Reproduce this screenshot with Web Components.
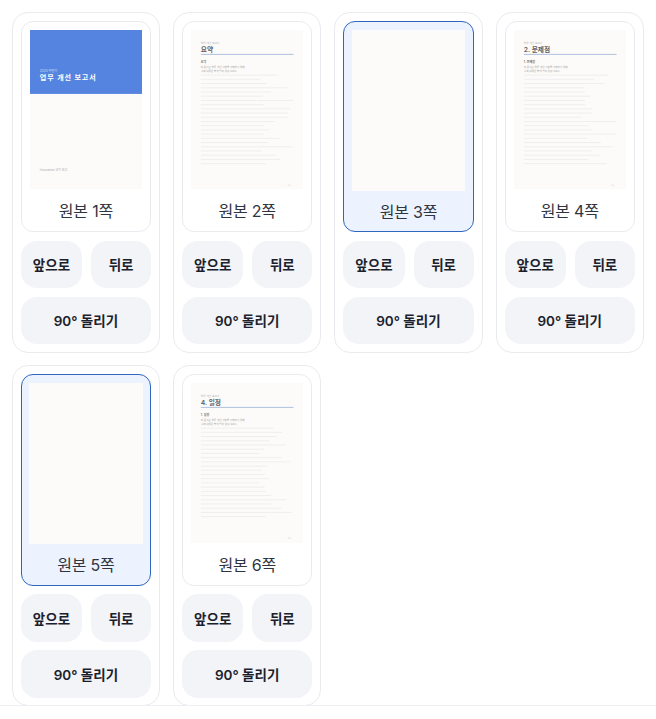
<!DOCTYPE html>
<html lang="ko">
<head>
<meta charset="utf-8">
<title>페이지 정리</title>
<style>
    html, body { margin: 0; padding: 0; background: #fff; }
    body { font-family: Inter, "Noto Sans CJK KR", sans-serif; height: 719px; overflow: hidden; }
</style>
</head>
<body>
<page-grid>
    <page-card number="1" kind="cover"></page-card>
    <page-card number="2" heading="요약" sub="요약" lines="82,64,71,94,76,67,100,68,96,94,94,80,68,74,68,85,72,99,65,81,86,70"></page-card>
    <page-card number="3" selected></page-card>
    <page-card number="4" heading="2. 문제점" sub="1. 문제점" lines="91,76,87,65,66,72,66,66,74,74,63,100,70,74,99,68,83,96,74,82,69,89"></page-card>
    <page-card number="5" selected></page-card>
    <page-card number="6" heading="4. 일정" sub="1. 일정" lines="78,88,82,74,92,68,63,87,96,72,66,69,73,63,69,70,76,92,76,87,98,70"></page-card>
</page-grid>
<bottom-bar></bottom-bar>

<script>
class PageGrid extends HTMLElement {
    constructor() {
        super();
        this.attachShadow({ mode: 'open' });
    }

    connectedCallback() {
        this.shadowRoot.innerHTML = `
            <style>
                :host {
                    display: grid;
                    grid-template-columns: repeat(4, minmax(0, 1fr));
                    gap: 12.5px 13px;
                    padding: 11.7px 12.2px 0 11.8px;
                }
            </style>
            <slot></slot>
        `;
    }
}

// a 320px wide sheet, shrunk to thumbnail size
class DocPage extends HTMLElement {
    constructor() {
        super();
        this.attachShadow({ mode: 'open' });
    }

    connectedCallback() {
        const kind = this.getAttribute('kind');
        const heading = this.getAttribute('heading');
        const sub = this.getAttribute('sub');
        const lines = (this.getAttribute('lines') || '').split(',').filter(Boolean);
        let body = '';

        if (kind === 'cover') {
            body = `
                <div class="cover-top">
                    <div class="cover-year">2025 하반기</div>
                    <div class="cover-title">업무 개선 보고서</div>
                </div>
                <div class="cover-foot">Innovation 성과 보고</div>
            `;
        } else if (heading) {
            body = `
                <div class="content">
                    <div class="eyebrow">업무 개선 보고서</div>
                    <div class="heading">${heading}</div>
                    <div class="rule"></div>
                    <div class="sub">${sub}</div>
                    <div class="para">이 문서는 업무 개선 사항을 설명하기 위해</div>
                    <div class="para">실제 내용은 별개 임의 생성 텍스트</div>
                    <div class="lines">
                        ${lines.map(w => `<i style="width:${w}%"></i>`).join('')}
                    </div>
                </div>
                <div class="folio">- ${this.getAttribute('folio') || ''} -</div>
            `;
        }

        this.shadowRoot.innerHTML = `
            <style>
                :host {
                    display: block;
                    height: 159.5px;
                    background: #fdfbf9;
                    overflow: hidden;
                    font-family: Inter, "Noto Sans CJK KR", sans-serif;
                }
                .sheet {
                    display: flex;
                    flex-direction: column;
                    width: 320px;
                    height: 454px;
                    transform: scale(.3512);
                    transform-origin: 0 0;
                }
                .cover-top {
                    height: 182px;
                    box-sizing: border-box;
                    background: #5584e0;
                    padding: 110px 28px 0;
                    color: #fff;
                }
                .cover-year { font-size: 9px; line-height: 12px; opacity: .7; }
                .cover-title { font-size: 20px; line-height: 28px; font-weight: 700; letter-spacing: 2.6px; white-space: nowrap; }
                .cover-foot { font-size: 8.5px; line-height: 12px; color: #a8a8a8; margin: auto 28px 50px; }
                .content { padding: 31px 28px 0; flex: 1; }
                .eyebrow { font-size: 7.5px; line-height: 12px; color: #b0b0b0; }
                .heading { font-size: 19px; line-height: 24px; font-weight: 600; color: #5c5f66; margin-top: 1px; }
                .rule { height: 3px; background: #b4c5e2; }
                .sub { font-size: 8.5px; line-height: 14px; font-weight: 600; color: #6e6e6e; margin-top: 14px; }
                .para { font-size: 7.2px; line-height: 13px; color: #a0a0a0; white-space: nowrap; }
                .para:first-of-type { margin-top: 4.5px; }
                .lines { display: flex; flex-direction: column; gap: 8.8px; margin-top: 2px; }
                .lines i { display: block; height: 3.2px; background: #efeff0; }
                .folio { font-size: 7.5px; line-height: 12px; color: #c8c8c8; text-align: right; margin: 0 32px 6px; }
            </style>
            <div class="sheet">${body}</div>
        `;
    }
}

class PageCard extends HTMLElement {
    constructor() {
        super();
        this.attachShadow({ mode: 'open' });
    }

    connectedCallback() {
        const number = this.getAttribute('number');
        const kind = this.getAttribute('kind') || '';
        const heading = this.getAttribute('heading') || '';
        const sub = this.getAttribute('sub') || '';
        const lines = this.getAttribute('lines') || '';

        this.shadowRoot.innerHTML = `
            <style>
                :host {
                    display: block;
                    box-sizing: border-box;
                    height: 341px;
                    padding: 8px;
                    background: #fff;
                    border: 1px solid #e9ebef;
                    border-radius: 16px;
                    font-family: Inter, "Noto Sans CJK KR", sans-serif;
                }
                .preview {
                    box-sizing: border-box;
                    height: 211.6px;
                    padding: 8px 8px 0;
                    background: #fff;
                    border: 1px solid #e9ebef;
                    border-radius: 12px;
                }
                :host([selected]) .preview {
                    background: #edf3fe;
                    border-color: #2e67c0;
                    padding: 8px 7.5px 0;
                }
                :host([selected]) doc-page { height: 161px; }
                :host([selected]) .label { height: 40.6px; }
                .label {
                    height: 42.1px;
                    display: flex;
                    align-items: center;
                    justify-content: center;
                    font-size: 16px;
                    letter-spacing: -.2px;
                    color: #2f3540;
                }
                .actions {
                    display: grid;
                    grid-template-columns: 61.4px minmax(0, 1fr);
                    gap: 8.4px 9px;
                    margin-top: 8.4px;
                }
                button {
                    height: 47.6px;
                    padding: 0;
                    border: 0;
                    border-radius: 16px;
                    background: #f2f4f8;
                    color: #1b212c;
                    font: 600 13.5px Inter, "Noto Sans CJK KR", sans-serif;
                    cursor: pointer;
                }
                .wide { grid-column: 1 / -1; }
            </style>
            <div class="preview">
                <doc-page kind="${kind}" heading="${heading}" sub="${sub}" lines="${lines}" folio="${number}"></doc-page>
                <div class="label">원본 ${number}쪽</div>
            </div>
            <div class="actions">
                <button>앞으로</button>
                <button>뒤로</button>
                <button class="wide">90° 돌리기</button>
            </div>
        `;
    }
}

class BottomBar extends HTMLElement {
    constructor() {
        super();
        this.attachShadow({ mode: 'open' });
    }

    connectedCallback() {
        this.shadowRoot.innerHTML = `
            <style>
                :host {
                    position: fixed;
                    left: 0;
                    right: 0;
                    bottom: 0;
                    height: 13px;
                    background: #fff;
                    border-top: 1px solid #eceef2;
                }
            </style>
        `;
    }
}

customElements.define('page-grid', PageGrid);
customElements.define('doc-page', DocPage);
customElements.define('page-card', PageCard);
customElements.define('bottom-bar', BottomBar);
</script>
</body>
</html>
